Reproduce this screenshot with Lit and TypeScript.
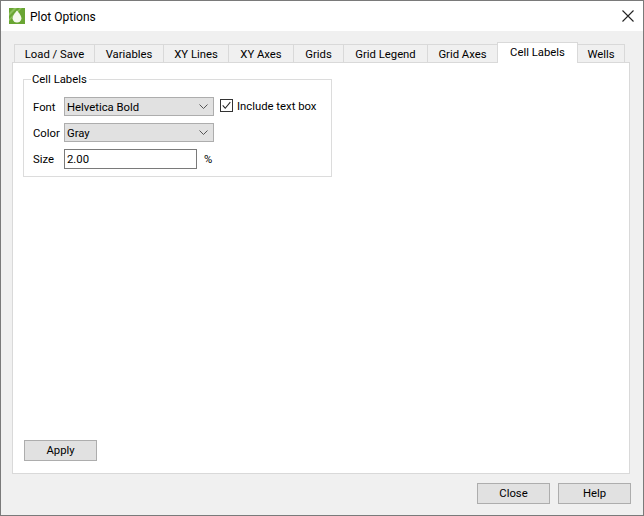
import { LitElement, html, css } from "lit";
import { customElement } from "lit/decorators.js";

const TABS: [string, number][] = [
  ["Load / Save", 81], ["Variables", 70], ["XY Lines", 66], ["XY Axes", 66], ["Grids", 51],
  ["Grid Legend", 85], ["Grid Axes", 71],
];

@customElement("app-root")
export class AppRoot extends LitElement {
  static styles = css`
    :host { display: block; width: 644px; height: 516px; font-family: Roboto, "Open Sans", sans-serif; font-size: 11.3px; color: #000; }
    * { box-sizing: border-box; }
    .win { width: 644px; height: 516px; border: 1px solid #7a7a7a; background: #f0f0f0; display: flex; flex-direction: column; }
    .title { height: 30px; background: #fff; display: flex; align-items: center; padding-left: 8px; gap: 5px; flex: none; font-size: 12px; }
    .title svg { display: block; }
    .title .t { flex: 1; padding-top: 1px; }
    .close { width: 14px; height: 14px; margin-right: 8px; display: block; }
    .body { flex: 1; display: flex; flex-direction: column; padding: 10px 12px 0 11px; min-height: 0; }
    .tabs { display: flex; align-items: flex-end; height: 21px; padding-left: 2px; flex: none; position: relative; z-index: 1; }
    .tab { height: 18px; border: 1px solid #d9d9d9; border-bottom: none; margin-left: -1px; background: #f0f0f0; display: flex; align-items: center; justify-content: center; flex: none; padding-top: 2px; }
    .tab:first-child { margin-left: 0; }
    .tab.sel { height: 21px; margin-bottom: -1px; background: #fff; padding-top: 0; padding-bottom: 1px; position: relative; z-index: 2; }
    .panel { height: 412px; background: #fff; border: 1px solid #d9d9d9; width: 618px; flex: none; padding: 9px 10px 12px 10px; display: flex; flex-direction: column; justify-content: space-between; }
    fieldset { margin: 0; border: 1px solid #dcdcdc; padding: 11px 0 8px 9px; width: 309px; height: 105px; min-width: 0; display: grid; grid-template-columns: 31px 150px auto; grid-auto-rows: 19px; row-gap: 7px; align-items: center; }
    legend { padding: 2px 2px 0 1px; margin-left: -2px; line-height: 12px; }
    .lbl { padding-top: 2px; }
    .sel-box { height: 19px; background: #e1e1e1; border: 1px solid #adadad; display: flex; align-items: center; justify-content: space-between; padding: 0 5px 0 2px; }
    .sel-box span { padding-top: 2px; }
    .input { height: 20px; width: 133px; border: 1px solid #7a7a7a; background: #fff; display: flex; align-items: center; padding: 2px 0 0 2px; }
    .sizerow { display: flex; align-items: center; gap: 7px; }
    .check { display: flex; align-items: center; gap: 4px; padding-left: 6px; transform: translateY(-1px); }
    .box { width: 13px; height: 13px; border: 1px solid #333; background: #fff; display: block; flex: none; }
    .btn { width: 73px; height: 21px; background: #e1e1e1; border: 1px solid #adadad; display: flex; align-items: center; justify-content: center; flex: none; }
    .panel > .btn { margin-left: 1px; }
    .foot { height: 41px; flex: none; display: flex; justify-content: flex-end; align-items: flex-start; gap: 8px; padding-top: 9px; padding-right: 0; }
    .chev { width: 9px; height: 5px; display: block; }
  `;

  private chev() {
    return html`<svg class="chev" viewBox="0 0 9 5"><path d="M.5.5l4 4 4-4" fill="none" stroke="#555" stroke-width="1"/></svg>`;
  }

  render() {
    return html`<div class="win">
      <div class="title">
        <svg width="16" height="16" viewBox="0 0 16 16">
          <rect width="16" height="16" fill="#69a533"/>
          <path d="M0 5L5 0h3L0 8zM0 11L11 0h2L0 13z" fill="#8cbf5c"/>
          <path d="M8 2.500C8 2.500 3.600 7.400 3.600 10.200a4.400 4.400 0 0 0 8.800 0C12.400 7.400 8 2.500 8 2.500z" fill="#f4f8ee"/>
        </svg>
        <span class="t">Plot Options</span>
        <svg class="close" viewBox="0 0 14 14"><path d="M1.500 1.500l11 11M12.500 1.500l-11 11" stroke="#222" stroke-width="1.100" fill="none"/></svg>
      </div>
      <div class="body">
        <div class="tabs">
          ${TABS.map(([t, w]) => html`<div class="tab" style="width:${w}px">${t}</div>`)}
          <div class="tab sel" style="width:81px">Cell Labels</div>
          <div class="tab" style="width:48px">Wells</div>
        </div>
        <div class="panel">
          <fieldset>
            <legend>Cell Labels</legend>
            <span class="lbl">Font</span>
            <div class="sel-box"><span>Helvetica Bold</span>${this.chev()}</div>
            <div class="check">
              <svg class="box" viewBox="0 0 13 13"><path d="M2 6.300l3 3.400 6-7.200" fill="none" stroke="#222" stroke-width="1.200"/></svg>
              <span class="lbl">Include text box</span>
            </div>
            <span class="lbl">Color</span>
            <div class="sel-box"><span>Gray</span>${this.chev()}</div>
            <span></span>
            <span class="lbl">Size</span>
            <div class="sizerow"><div class="input">2.00</div><span class="lbl">%</span></div>
          </fieldset>
          <div class="btn">Apply</div>
        </div>
        <div class="foot"><div class="btn">Close</div><div class="btn">Help</div></div>
      </div>
    </div>`;
  }
}
